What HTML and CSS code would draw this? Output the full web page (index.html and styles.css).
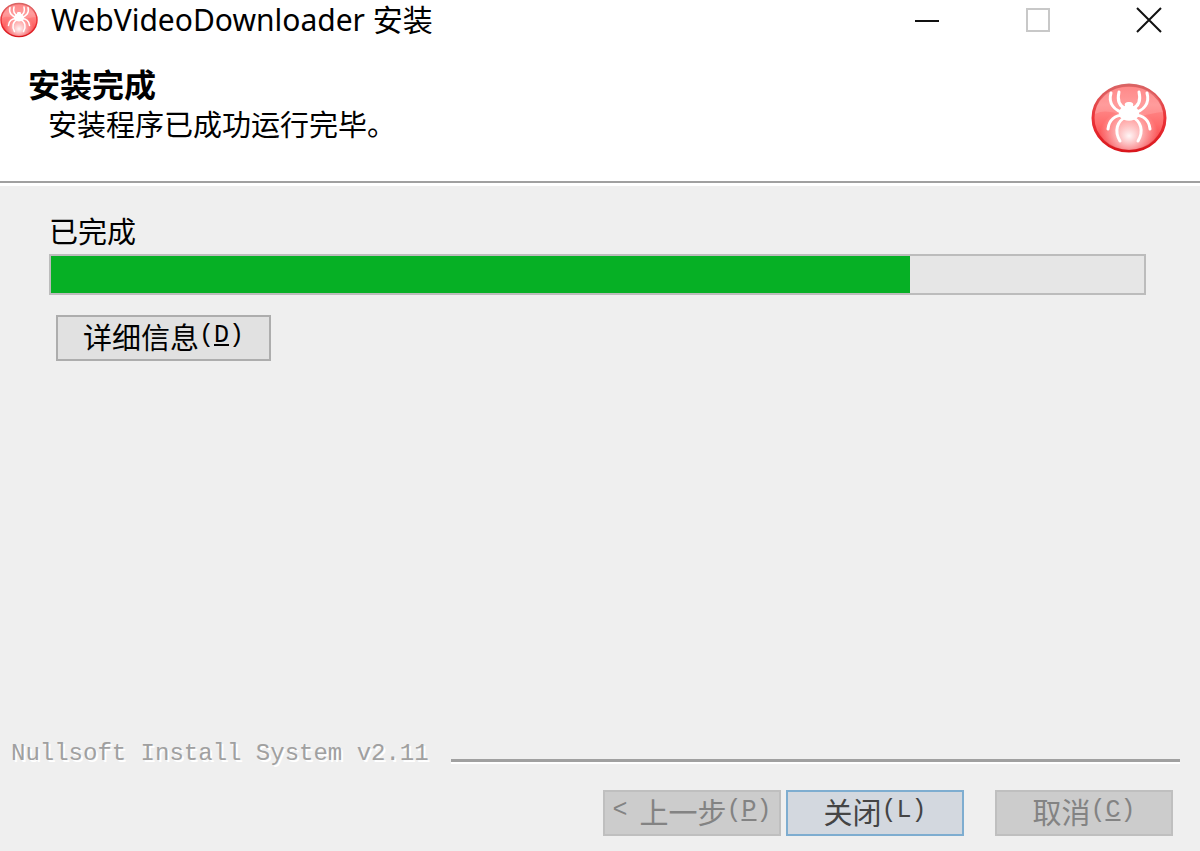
FILE: index.html
```html
<!DOCTYPE html>
<html lang="zh-CN">
<head>
  <meta charset="UTF-8">
  <title>WebVideoDownloader 安装</title>
  <meta name="viewport" content="width=device-width, initial-scale=1.0">
  <link rel="stylesheet" href="styles.css">
</head>
<body>
  <svg class="defs" width="0" height="0" aria-hidden="true">
    <defs>
      <linearGradient id="ball" x1="0" y1="0" x2="0" y2="1">
        <stop offset="0" stop-color="#ff7474"/>
        <stop offset="0.3" stop-color="#ff8c8c"/>
        <stop offset="0.6" stop-color="#ff6c6c"/>
        <stop offset="1" stop-color="#f43238"/>
      </linearGradient>
      <radialGradient id="glow" cx="0.5" cy="0.78" r="0.42">
        <stop offset="0" stop-color="#fff" stop-opacity="0.95"/>
        <stop offset="1" stop-color="#fff" stop-opacity="0"/>
      </radialGradient>
      <linearGradient id="rim" x1="0" y1="0" x2="0" y2="1">
        <stop offset="0" stop-color="#d96464"/>
        <stop offset="0.5" stop-color="#ec3338"/>
        <stop offset="1" stop-color="#d9161c"/>
      </linearGradient>
    </defs>
    <symbol id="spider" viewBox="0 0 76 70">
      <ellipse cx="38" cy="35" rx="36" ry="33" fill="url(#ball)" stroke="url(#rim)" stroke-width="3"/>
      <ellipse cx="38" cy="35" rx="35" ry="32" fill="url(#glow)"/>
      <path d="M4 31C15 25 25 31 38 33s24-4 34-4C70 12 57 4 38 4S6 13 4 31z" fill="#fff" opacity="0.14"/>
      <g fill="none" stroke="#fff" stroke-width="3" stroke-linecap="round" stroke-linejoin="round">
        <path d="M34 30C23 28 17 20 20 10M35 26c-7-3-9-9-7-17M33 32c-9 0-15 5-16 14M35 34c-9 4-12 14-6 24"/>
        <path d="M42 30c11-2 17-10 14-20M41 26c7-3 9-9 7-17M43 32c9 0 15 5 16 14M41 34c9 4 12 14 6 24"/>
      </g>
      <path d="M34 23c-1-3 1-4 4-4s5 1 4 4c5 2 8 6 5 11-4 5-14 5-18 0-3-5 0-9 5-11z" fill="#fff"/>
    </symbol>
  </svg>

  <div class="installer">
    <div class="titlebar">
      <svg class="app-icon" aria-hidden="true"><use href="#spider"/></svg>
      <div class="app-title">WebVideoDownloader 安装</div>
      <button class="window-button" aria-label="最小化">
        <svg width="26" height="26" viewBox="0 0 26 26"><path d="M1 14h24" stroke="#111" stroke-width="2"/></svg>
      </button>
      <button class="window-button" aria-label="最大化" disabled>
        <svg width="26" height="26" viewBox="0 0 26 26"><rect x="2" y="2" width="22" height="22" fill="none" stroke="#c8c8c8" stroke-width="2"/></svg>
      </button>
      <button class="window-button" aria-label="关闭窗口">
        <svg width="26" height="26" viewBox="0 0 26 26"><path d="M1 1l24 24M25 1L1 25" stroke="#111" stroke-width="2"/></svg>
      </button>
    </div>

    <header class="page-header">
      <div>
        <h1>安装完成</h1>
        <p>安装程序已成功运行完毕。</p>
      </div>
      <svg class="header-logo" aria-hidden="true"><use href="#spider"/></svg>
    </header>

    <main class="content">
      <label for="installProgress">已完成</label>
      <progress id="installProgress" value="786" max="1000"></progress>
      <button class="button details-button">详细信息<span class="key">(<u>D</u>)</span></button>
    </main>

    <footer class="footer">
      <div class="branding">Nullsoft Install System v2.11</div>
      <div class="actions">
        <button class="button" disabled><span class="key">&lt;</span>上一步<span class="key">(<u>P</u>)</span></button>
        <button class="button close-button">关闭<span class="key">(L)</span></button>
        <button class="button cancel-button" disabled>取消<span class="key">(<u>C</u>)</span></button>
      </div>
    </footer>
  </div>
</body>
</html>
```
FILE: styles.css
```css
*,
*::after {
  box-sizing: border-box;
}

body {
  margin: 0;
  background: #efefef;
  color: #000;
  font-family: "Noto Sans CJK SC", sans-serif;
  font-size: 29px;
  line-height: 40px;
}

.defs {
  position: absolute;
}

.installer {
  display: flex;
  flex-direction: column;
  min-height: 100vh;
}

.titlebar {
  display: flex;
  align-items: center;
  height: 40px;
  padding-right: 1px;
  background: #fff;
}

.app-icon {
  width: 38px;
  height: 36px;
}

.app-title {
  flex: 1;
  padding-left: 13px;
  font-family: "Noto Sans", "Noto Sans CJK SC", sans-serif;
  font-size: 30px;
  line-height: 36px;
  white-space: nowrap;
}

.window-button {
  display: flex;
  align-items: center;
  justify-content: center;
  width: 101px;
  height: 40px;
  margin-left: 10px;
  padding: 0;
  border: none;
  background: none;
}

.page-header {
  display: flex;
  justify-content: space-between;
  height: 143px;
  padding: 23px 33px 0 28px;
  background: #fff;
  border-bottom: 2px solid #a0a0a0;
}

.page-header h1 {
  margin: 0;
  font-size: 32px;
  line-height: 40px;
}

.page-header p {
  margin: 0;
  padding-left: 20px;
}

.header-logo {
  width: 76px;
  height: 70px;
  margin-top: 20px;
}

.content {
  display: flex;
  flex: 1;
  flex-direction: column;
  align-items: flex-start;
  padding: 24px 54px 0 49px;
  border-top: 3px solid #fff;
}

progress {
  display: block;
  width: 100%;
  height: 41px;
  margin-top: 4px;
  border: 2px solid #bcbcbc;
  background: #e6e6e6;
  appearance: none;
}

progress::-webkit-progress-bar {
  background: #e6e6e6;
}

progress::-webkit-progress-value {
  background: #06b025;
}

.button {
  display: flex;
  align-items: center;
  justify-content: center;
  width: 178px;
  height: 46px;
  padding: 0 0 4px;
  border: 2px solid #adadad;
  background: #e1e1e1;
  color: #000;
  font-family: inherit;
  font-size: 29px;
  line-height: 40px;
  white-space: nowrap;
}

.button:disabled {
  border-color: #bfbfbf;
  background: #cccccc;
  color: #838383;
}

.key {
  font-family: "Liberation Mono", monospace;
  font-size: 25px;
}

.key:first-child:not(:last-child) {
  margin-right: 12px;
}

.details-button {
  width: 215px;
  margin: 20px 0 0 7px;
}

.close-button {
  border-color: #7eadd0;
  background: #d3d8df;
  color: #444;
}

.cancel-button {
  margin-left: 26px;
}

.footer {
  padding: 0 20px 15px 11px;
}

.branding {
  display: flex;
  align-items: center;
  gap: 22px;
  color: #a0a0a0;
  font-family: "Liberation Mono", monospace;
  font-size: 24px;
  white-space: nowrap;
  text-shadow: 2px 2px 0 #fff;
}

.branding::after {
  content: "";
  flex: 1;
  height: 5px;
  margin-top: 14px;
  border-top: 3px solid #a0a0a0;
  border-bottom: 2px solid #fff;
}

.actions {
  display: flex;
  justify-content: flex-end;
  gap: 5px;
  margin: 16px -13px 0 0;
  padding-right: 20px;
}
```
